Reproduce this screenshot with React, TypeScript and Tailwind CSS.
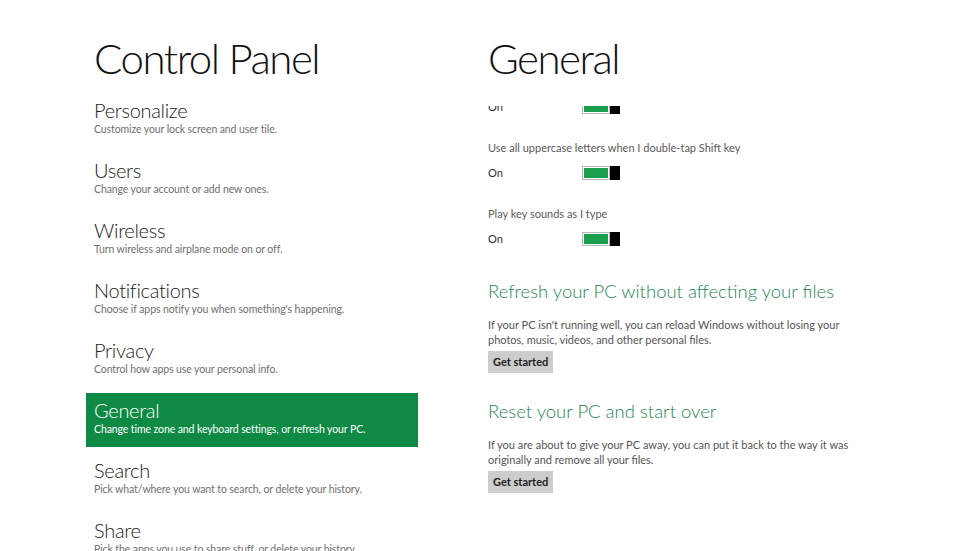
const items = [
  { title: "Personalize", desc: "Customize your lock screen and user tile." },
  { title: "Users", desc: "Change your account or add new ones." },
  { title: "Wireless", desc: "Turn wireless and airplane mode on or off." },
  { title: "Notifications", desc: "Choose if apps notify you when something's happening." },
  { title: "Privacy", desc: "Control how apps use your personal info." },
  { title: "General", desc: "Change time zone and keyboard settings, or refresh your PC.", active: true },
  { title: "Search", desc: "Pick what/where you want to search, or delete your history." },
  { title: "Share", desc: "Pick the apps you use to share stuff, or delete your history." },
];

function Toggle() {
  return (
    <div className="flex w-[38px] h-[14px]">
      <div className="flex-1 border border-[#b8b8b8] bg-white p-[1px]">
        <div className="w-full h-full bg-[#1a9f4e]" />
      </div>
      <div className="w-[10px] h-full bg-black" />
    </div>
  );
}

function ToggleSetting({ label }: { label: string }) {
  return (
    <div className="flex flex-col">
      <div className="h-[16px] leading-[16px] text-[11px] text-[#5a5a5a]">{label}</div>
      <div className="mt-[10px] flex items-center h-[14px]">
        <span className="w-[94px] text-[11px] leading-[14px] text-[#333]">On</span>
        <Toggle />
      </div>
    </div>
  );
}

export default function App() {
  return (
    <div
      className="w-[980px] h-[551px] bg-white overflow-hidden flex"
      style={{ fontFamily: 'Lato, "Open Sans", sans-serif' }}
    >
      {/* Left: control panel categories */}
      <div className="ml-[86px] w-[332px] flex flex-col shrink-0">
        <h1 className="mt-[32px] shrink-0 pl-2 h-[61px] text-[42px] leading-[52px] font-light tracking-[-1.5px] text-[#111]">
          Control Panel
        </h1>
        <div className="flex flex-col shrink-0 gap-[6px]">
          {items.map((it) => (
            <div
              key={it.title}
              className={`h-[54px] shrink-0 pl-2 pt-[5px] flex flex-col ${it.active ? "bg-[#0f8a45]" : ""}`}
            >
              <div className={`text-[20px] leading-[24px] font-light tracking-[-0.3px] ${it.active ? "text-white" : "text-[#222]"}`}>
                {it.title}
              </div>
              <div className={`text-[10.5px] leading-[14px] tracking-[-0.1px] ${it.active ? "text-white" : "text-[#707070]"}`}>
                {it.desc}
              </div>
            </div>
          ))}
        </div>
      </div>

      {/* Right: General settings */}
      <div className="ml-[70px] flex-1 flex flex-col">
        <h2 className="mt-[32px] h-[52px] shrink-0 text-[42px] leading-[52px] font-light tracking-[-1.5px] text-[#111]">
          General
        </h2>
        <div className="mt-[22px] flex-1 overflow-hidden">
          <div className="mt-[-32px] flex flex-col">
            <ToggleSetting label="Show text suggestions as I type" />
            <div className="mt-[26px]">
              <ToggleSetting label="Use all uppercase letters when I double-tap Shift key" />
            </div>
            <div className="mt-[26px]">
              <ToggleSetting label="Play key sounds as I type" />
            </div>

            <h3 className="mt-[33px] h-[24px] leading-[24px] text-[18.5px] font-light text-[#1f8555]">
              Refresh your PC without affecting your files
            </h3>
            <p className="mt-[14px] w-[365px] text-[11px] leading-[15px] text-[#555]">
              If your PC isn't running well, you can reload Windows without losing your photos, music, videos, and other personal files.
            </p>
            <div className="mt-[4px] flex">
              <button className="h-[22px] px-[5px] bg-[#cdcdcd] text-[11px] font-bold text-[#222]">Get started</button>
            </div>

            <h3 className="mt-[26px] h-[24px] leading-[24px] text-[18.5px] font-light text-[#1f8555]">
              Reset your PC and start over
            </h3>
            <p className="mt-[14px] w-[365px] text-[11px] leading-[15px] text-[#555]">
              If you are about to give your PC away, you can put it back to the way it was originally and remove all your files.
            </p>
            <div className="mt-[4px] flex">
              <button className="h-[22px] px-[5px] bg-[#cdcdcd] text-[11px] font-bold text-[#222]">Get started</button>
            </div>
          </div>
        </div>
      </div>
    </div>
  );
}
